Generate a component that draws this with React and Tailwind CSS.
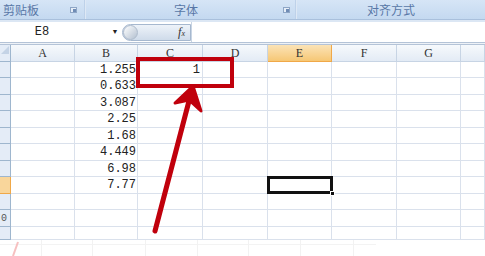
import React from "react";

// column + row sizes (px) taken from the sheet
const COLS = [
  { key: "A", w: "w-[64px]" },
  { key: "B", w: "w-[63px]" },
  { key: "C", w: "w-[65px]" },
  { key: "D", w: "w-[65px]" },
  { key: "E", w: "w-[64px]" },
  { key: "F", w: "w-[65px]" },
  { key: "G", w: "w-[64px]" },
  { key: "", w: "w-[24px]" },
];
const ROWS = ["h-[16px]", "h-[17px]", "h-[16px]", "h-[17px]", "h-[16px]", "h-[17px]", "h-[16px]", "h-[17px]", "h-[16px]", "h-[17px]", "h-[13px]"];
const B_VALUES = ["1.255", "0.633", "3.087", "2.25", "1.68", "4.449", "6.98", "7.77"];

const mono = "font-['Liberation_Mono','DejaVu_Sans_Mono',monospace]";
const cjk = "font-['Noto_Sans_CJK_SC','Noto_Sans',sans-serif]";

const Launcher = () => (
  <span className="w-[7px] h-[6px] border border-[#8ea6c6] bg-[#e6eef8] flex items-end justify-end">
    <span className="w-[3px] h-[3px] bg-[#6f8cb5]" />
  </span>
);

const Ribbon = () => (
  <div className={`flex h-[19px] bg-gradient-to-b from-[#d6e5f6] to-[#c4d9f0] text-[12px] text-[#5877a6] ${cjk}`}>
    <div className="w-[84px] flex items-center justify-between pl-[3px] pr-[7px]">
      <span>剪贴板</span>
      <Launcher />
    </div>
    <div className="w-[2px] bg-gradient-to-r from-[#aec6e3] to-[#eef4fb]" />
    <div className="w-[209px] flex items-center pr-[5px]">
      <span className="flex-1 text-center pl-[3px]">字体</span>
      <Launcher />
    </div>
    <div className="w-[2px] bg-gradient-to-r from-[#aec6e3] to-[#eef4fb]" />
    <div className="flex-1 flex items-center justify-center">
      <span>对齐方式</span>
    </div>
  </div>
);

const FormulaBar = () => (
  <div className="flex flex-col">
    <div className="h-[3px] bg-[#dce7f4] border-t border-[#a9c0dc]" />
    <div className="flex h-[20px] bg-white items-center">
      <div className={`w-[84px] text-center text-[12px] text-[#222] ${mono}`}>E8</div>
      <div className="w-[24px]" />
      <div className="w-[14px] flex justify-center text-[7px] text-[#222]">▼</div>
      <div className="w-[69px] h-[17px] rounded-l-full bg-gradient-to-b from-[#eef3f9] to-[#cfdbea] border border-[#a6b8cf] flex items-center justify-between pr-[5px]">
        <span className="w-[15px] h-[15px] rounded-full bg-gradient-to-br from-[#ffffff] to-[#b3c0d0] border border-[#aebbcc]" />
        <span className="italic text-[12px] text-[#333] font-['Liberation_Serif',serif]">
          f<span className="text-[8px]">x</span>
        </span>
      </div>
      <div className="flex-1 h-[20px] border-l border-[#c9d5e4] bg-white" />
    </div>
    <div className="h-[3px] bg-[#eef2f7] border-t border-b border-[#b4c3d7]" />
  </div>
);

const HeaderRow = () => (
  <div className="flex h-[17px]">
    <div className="w-[11px] bg-[#e4ecf7] border-r border-b border-[#9eb6ce] relative overflow-hidden">
      <div className="absolute left-[1px] top-[1px] w-0 h-0 border-l-[8px] border-l-transparent border-b-[8px] border-b-[#c4d3e6]" />
    </div>
    {COLS.map((c, i) =>
      c.key === "E" ? (
        <div key={i} className={`${c.w} shrink-0 flex items-center justify-center bg-gradient-to-b from-[#fbe3b6] to-[#f6c774] border-r border-b border-[#f0a848] text-[12px] text-[#333] font-['Liberation_Serif',serif]`}>
          {c.key}
        </div>
      ) : (
        <div key={i} className={`${c.w} shrink-0 flex items-center justify-center bg-gradient-to-b from-[#f6f9fc] to-[#e3ebf5] border-r border-b border-[#c7d4e4] text-[12px] text-[#333] font-['Liberation_Serif',serif]`}>
          {c.key}
        </div>
      )
    )}
  </div>
);

const Row = ({ h, idx }) => (
  <div className={`flex ${h}`}>
    {idx === 7 ? (
      <div className="w-[11px] shrink-0 bg-[#f9d69b] border-r border-b border-[#f0a848]" />
    ) : (
      <div className={`w-[11px] shrink-0 bg-[#e4ecf7] border-r border-b border-[#9eb6ce] flex items-center justify-start text-[10px] text-[#555] ${mono}`}>
        {idx === 9 ? <span className="ml-[1px]">0</span> : null}
      </div>
    )}
    {COLS.map((c, i) => (
      <div key={i} className={`${c.w} shrink-0 border-r border-b border-[#dae1ec] flex items-center justify-end text-[12px] text-[#222] ${mono} ${i === 1 ? "pr-[1px]" : "pr-[2px]"}`}>
        {i === 1 && B_VALUES[idx]}
        {i === 2 && idx === 0 && "1"}
      </div>
    ))}
  </div>
);

const Reflection = () => (
  <div className="relative flex-1 bg-white">
    <div className="absolute left-0 top-[4px] w-[376px] border-t border-[#f3f3f3]" />
    {["left-[41px]", "left-[92px]", "left-[145px]", "left-[197px]", "left-[248px]", "left-[300px]", "left-[353px]"].map((l) => (
      <div key={l} className={`absolute ${l} top-0 bottom-0 border-l border-[#f2f2f2]`} />
    ))}
  </div>
);

export default function App() {
  return (
    <div className="relative w-[485px] h-[256px] overflow-hidden bg-white flex flex-col">
      <Ribbon />
      <FormulaBar />
      <HeaderRow />
      {ROWS.map((h, i) => (
        <Row key={i} h={h} idx={i} />
      ))}
      <Reflection />

      {/* active cell E8 */}
      <div className="absolute left-[267px] top-[176px] w-[66px] h-[18px] border-[3px] border-[#111]" />
      <div className="absolute left-[330px] top-[191px] w-[5px] h-[5px] bg-[#111] border border-white" />

      {/* red annotation box */}
      <div className="absolute left-[136px] top-[57px] w-[98px] h-[31px] border-[4px] border-[#c0000c]" />

      {/* red arrow */}
      <svg className="absolute inset-0 pointer-events-none" width="485" height="256" viewBox="0 0 485 256">
        <line x1="155" y1="231" x2="189" y2="101" stroke="#c0000c" strokeWidth="5" strokeLinecap="round" />
        <polygon points="193,86 201,111 189,100 175,103" fill="#c0000c" stroke="#c0000c" strokeWidth="3" strokeLinejoin="round" />
        <line x1="18" y1="242" x2="13" y2="256" stroke="#f6c0c0" strokeWidth="2" />
      </svg>
    </div>
  );
}
